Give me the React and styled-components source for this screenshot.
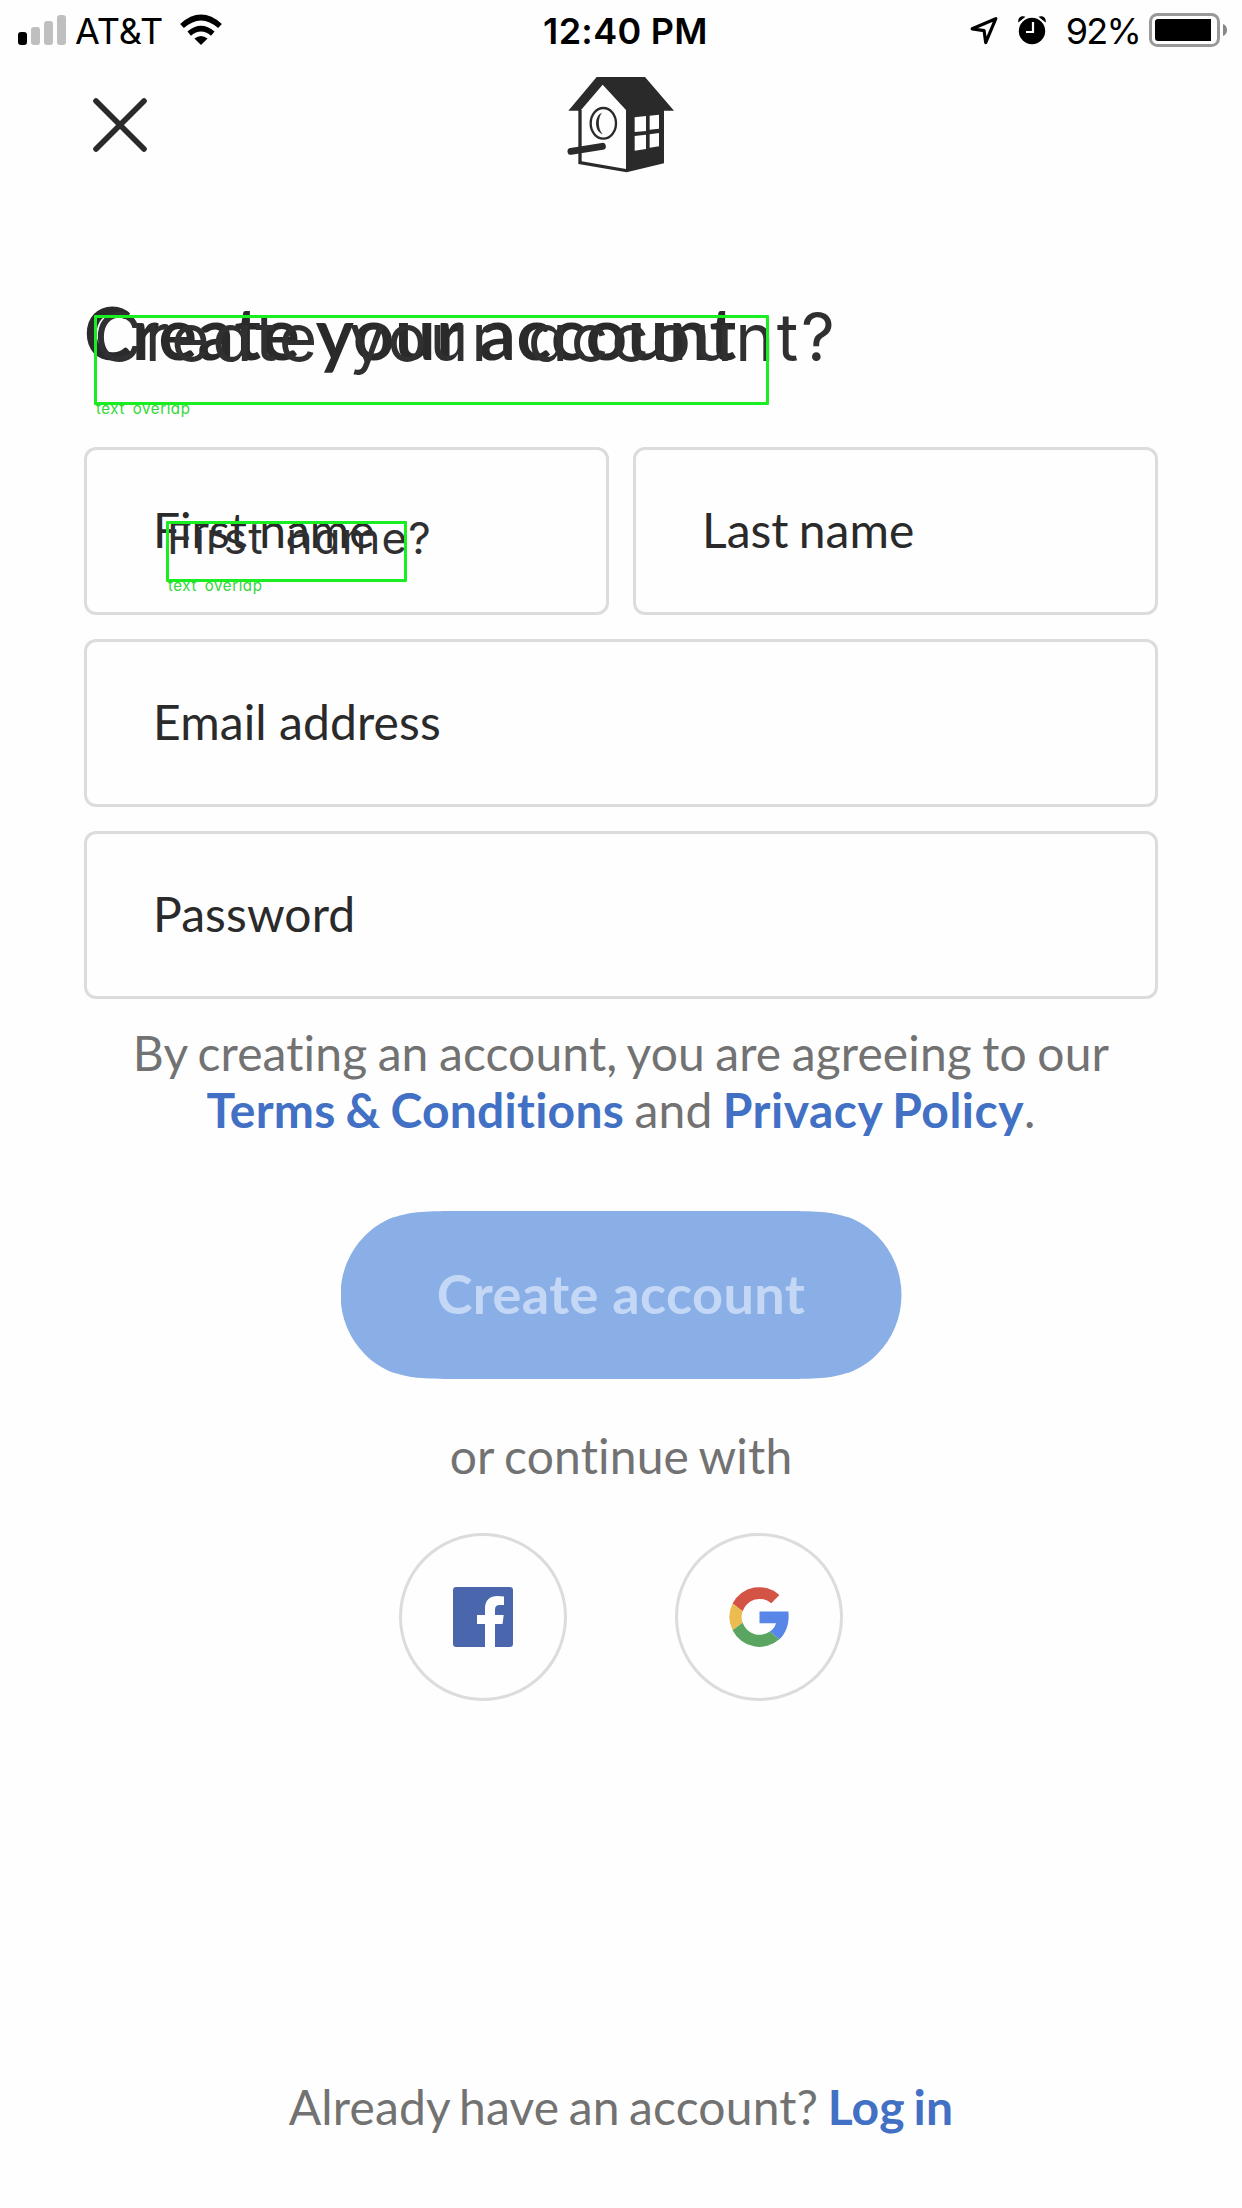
import React from "react";
import styled, { createGlobalStyle } from "styled-components";

const GlobalStyle = createGlobalStyle`
  * { box-sizing: border-box; }
  body { margin: 0; background: #fefefe; }
`;

const Screen = styled.div`
  width: 1242px;
  height: 2208px;
  display: flex;
  flex-direction: column;
  background: #fefefe;
  color: #2a2a2b;
  font-family: Lato, sans-serif;
  font-variant-ligatures: none;
  overflow: hidden;
`;

const StatusBar = styled.div`
  display: grid;
  grid-template-columns: 1fr auto 1fr;
  height: 60px;
  padding: 0 15px 0 18px;
  color: #000;
  font: 400 36px/62px Inter, sans-serif;
`;

const StatusGroup = styled.div`
  display: flex;
  justify-content: ${(p) => p.$align || "flex-start"};
  align-items: flex-start;
`;

const StatusText = styled.span`
  white-space: nowrap;
  font-weight: ${(p) => p.$weight || 400};
  letter-spacing: ${(p) => p.$spacing || "0"};
  margin: ${(p) => p.$margin || "0"};
`;

const StatusIcon = styled.svg`
  display: block;
  flex: none;
  height: 60px;
`;

const Header = styled.header`
  display: grid;
  grid-template-columns: 1fr 107px 1fr;
  align-items: center;
  padding: 16px 84px 0 93px;
  height: 113px;
`;

const IconButton = styled.button`
  display: block;
  width: 54px;
  height: 54px;
  padding: 0;
  border: 0;
  background: none;
  margin-top: 1px;
`;

const Logo = styled.svg`
  display: block;
  width: 107px;
  height: 97px;
  margin-left: -5px;
`;

const Content = styled.main`
  flex: 1;
  display: flex;
  flex-direction: column;
  padding: 113px 84px 72px;
`;

const TitleBlock = styled.div`
  position: relative;
  height: 90px;
  margin-bottom: 71px;
`;

const Title = styled.h1`
  margin: 0;
  font-size: 72px;
  font-weight: 700;
  line-height: 92px;
  letter-spacing: 0.6px;
  word-spacing: -1px;
  white-space: nowrap;
`;

const OverlayText = styled.span`
  position: absolute;
  left: ${(p) => p.$x}px;
  top: ${(p) => p.$y}px;
  font-family: Inter, sans-serif;
  font-weight: ${(p) => p.$weight || 400};
  font-size: ${(p) => p.$size}px;
  line-height: ${(p) => p.$size}px;
  letter-spacing: ${(p) => p.$spacing || 0}px;
  word-spacing: ${(p) => p.$word || 0}px;
  font-feature-settings: "cv11", "calt" 0;
  white-space: nowrap;
  color: ${(p) => p.$color || "#303032"};
`;

const OverlayFrame = styled.div`
  position: absolute;
  left: ${(p) => p.$x}px;
  top: ${(p) => p.$y}px;
  width: ${(p) => p.$w}px;
  height: ${(p) => p.$h}px;
  border: 3px solid #18ee20;
  border-radius: 1px;
`;

const Fields = styled.form`
  display: grid;
  grid-template-columns: 1fr 1fr;
  gap: 24px;
`;

const Field = styled.div`
  position: relative;
  display: flex;
  align-items: center;
  height: 168px;
  padding: 0 66px 3px;
  border: 3px solid #dcdcdc;
  border-radius: 12px;
  font-size: 48px;
  line-height: 58px;
  letter-spacing: ${(p) => p.$spacing || "0"};
  word-spacing: ${(p) => p.$word || "0"};
  grid-column: ${(p) => (p.$wide ? "1 / -1" : "auto")};
`;

const Terms = styled.p`
  margin: 25px 0 73px;
  text-align: center;
  font-size: 48px;
  line-height: 57px;
  letter-spacing: 0.12px;
  word-spacing: -2px;
  color: #727272;
`;

const Link = styled.a`
  color: #4170c4;
  font-weight: 700;
  letter-spacing: ${(p) => p.$spacing || "0.2px"};
`;

const Submit = styled.button`
  align-self: center;
  width: 561px;
  height: 168px;
  padding: 0 0 4px;
  border: 0;
  background: #8aafe7;
  color: #c4d8f6;
  font: 700 54px/65px Lato, sans-serif;
  letter-spacing: 0.4px;
  clip-path: path("M128 0 H433 C469.6 0 488 0 504.7 5.5 L508 6.3 C519 10.3 528.5 16.7 536.4 24.6 A84 84 0 0 1 536.4 143.4 C528.5 151.3 519 157.7 508 161.7 L504.7 162.5 C488 168 469.6 168 433 168 H128 C91.4 168 73 168 56.3 162.5 L53 161.7 C42 157.7 32.5 151.3 24.6 143.4 A84 84 0 0 1 24.6 24.6 C32.5 16.7 42 10.3 53 6.3 L56.3 5.5 C73 0 91.4 0 128 0 Z");
`;

const Divider = styled.p`
  margin: 48px 0 48px;
  text-align: center;
  font-size: 48px;
  line-height: 58px;
  letter-spacing: 0.15px;
  word-spacing: -2px;
  color: #727272;
`;

const Socials = styled.div`
  display: flex;
  justify-content: center;
  gap: 108px;
`;

const SocialButton = styled.button`
  display: flex;
  align-items: center;
  justify-content: center;
  width: 168px;
  height: 168px;
  padding: 0;
  border: 3px solid #dcdcdc;
  border-radius: 50%;
  background: transparent;
`;

const Footer = styled.p`
  margin: auto 0 0;
  text-align: center;
  font-size: 48px;
  line-height: 58px;
  letter-spacing: 0.15px;
  word-spacing: -3px;
  color: #727272;
`;

const Signal = () => (
  <StatusIcon width="48" viewBox="18 0 48 60">
    <rect x="18" y="32" width="9" height="13" rx="3" />
    <g fill="#bfbfbf">
      <rect x="31" y="27" width="9" height="18" rx="3" />
      <rect x="44" y="21" width="9" height="24" rx="3" />
      <rect x="57" y="15" width="9" height="30" rx="3" />
    </g>
  </StatusIcon>
);

const Wifi = () => (
  <StatusIcon width="42" viewBox="180 0 42 60">
    <path d="M201 45 L194.4 38.6 Q201 33.2 207.6 38.6 Z" />
    <path d="M189.2 33.6 Q201 23.8 212.8 33.6" fill="none" stroke="#000" strokeWidth="5.6" />
    <path d="M182 26 Q201 9 220 26" fill="none" stroke="#000" strokeWidth="5.6" />
  </StatusIcon>
);

const Arrow = () => (
  <StatusIcon width="28" viewBox="970.5 0 28 60">
    <path
      d="M972.7 28.8 L996.3 18.7 L986.2 42.6 L984.6 30.6 Z"
      fill="none"
      stroke="#000"
      strokeWidth="3.2"
      strokeLinejoin="round"
    />
  </StatusIcon>
);

const Alarm = () => (
  <StatusIcon width="28" viewBox="1019 0 28 60">
    <circle cx="1033" cy="31" r="13.2" />
    <path d="M1019.3 22.5 C1018.5 17.5 1022.5 15 1026.5 16.7 Z M1046.7 22.5 C1047.5 17.5 1043.5 15 1039.5 16.7 Z" />
    <path d="M1034 22 V32 H1027" fill="none" stroke="#fff" strokeWidth="2.2" />
  </StatusIcon>
);

const Battery = () => (
  <StatusIcon width="78" viewBox="1149 0 78 60">
    <rect x="1150.5" y="14.5" width="68" height="31" rx="7" fill="none" stroke="#999" strokeWidth="3" />
    <path d="M1158 19 H1211 V41 H1158 Q1155 41 1155 38 V22 Q1155 19 1158 19 Z" />
    <path d="M1223 24 Q1227 25.5 1227 30 Q1227 34.5 1223 36 Z" fill="#888" />
  </StatusIcon>
);

const Close = () => (
  <svg width="54" height="54" viewBox="0 0 54 54" display="block">
    <path d="M3 3 L51 51 M51 3 L3 51" stroke="#2a2a2b" strokeWidth="5.6" strokeLinecap="round" />
  </svg>
);

const Birdhouse = () => (
  <Logo viewBox="201 228 321 291">
    <path fill="#2a2a2b" d="M290 231 H435 L522 332 H492 V490 L380 517 L235 492 V332 H205 Z" />
    <path fill="#fefefe" d="M308 254 L378 330 V507 L245 484 V328 Z" />
    <ellipse cx="310" cy="370" rx="38" ry="46" fill="none" stroke="#2a2a2b" strokeWidth="7" />
    <path fill="#2a2a2b" d="M306 338 C282 346 282 395 308 402 C293 388 293 352 306 338 Z" />
    <path d="M213 454 L307 439" stroke="#2a2a2b" strokeWidth="21" strokeLinecap="round" />
    <path
      fill="#fefefe"
      d="M404 352 L438 348 V393 L404 396 Z M449 347 L477 344 V386 L449 389 Z M404 408 L438 404 V447 L404 452 Z M449 403 L477 399 V439 L449 443 Z"
    />
  </Logo>
);

const Facebook = () => (
  <svg width="60" height="60" viewBox="0 0 60 60">
    <path
      fill="#4a66ad"
      d="M3.3 0 H56.7 Q60 0 60 3.3 V56.7 Q60 60 56.7 60 H42 V37 H49.5 L50.7 28 H42 V22.5 Q42 18 46.5 18 H51 V9.4 Q48 9 45 9 Q32 9 32 21.5 V28 H24 V37 H32 V60 H3.3 Q0 60 0 56.7 V3.3 Q0 0 3.3 0 Z"
    />
  </svg>
);

const Google = () => (
  <svg width="60" height="60" viewBox="0 0 60 60">
    <path fill="#d35345" d="M3.6 16.4 A30 30 0 0 1 50.4 7.9 L42.3 16.2 A18 18 0 0 0 13.6 24.2 Z" />
    <path fill="#ecbc50" d="M3.6 16.4 A30 30 0 0 0 3.6 43.2 L13.6 35.8 A18 18 0 0 1 13.6 24.2 Z" />
    <path fill="#5aa561" d="M3.6 43.2 A30 30 0 0 0 50.4 52.3 L40.8 44.6 A18 18 0 0 1 13.6 35.8 Z" />
    <path fill="#5786e8" d="M30.5 24.5 H59.3 C60.8 35 57.5 46 50.4 52.3 L40.8 44.6 Q45.5 41.5 47 36.2 H30.5 Z" />
  </svg>
);

export default function App() {
  return (
    <Screen>
      <GlobalStyle />
      <StatusBar>
        <StatusGroup>
          <Signal />
          <StatusText $margin="0 17px 0 9px">AT&amp;T</StatusText>
          <Wifi />
        </StatusGroup>
        <StatusText $weight={600} $spacing="0.3px" $margin="0 0 0 6px">12:40 PM</StatusText>
        <StatusGroup $align="flex-end">
          <Arrow />
          <StatusText $margin="0 0 0 20px"><Alarm /></StatusText>
          <StatusText $spacing="-1.8px" $margin="0 9px 0 20px">92%</StatusText>
          <Battery />
        </StatusGroup>
      </StatusBar>
      <Header>
        <IconButton aria-label="Close"><Close /></IconButton>
        <Birdhouse />
      </Header>
      <Content>
        <TitleBlock>
          <Title>Create your account</Title>
          <OverlayText $x={10} $y={18} $size={66} $spacing={2.6} $word={8}>Create your account?</OverlayText>
          <OverlayFrame $x={10} $y={29} $w={675} $h={90} />
          <OverlayText $x={12} $y={115} $size={15} $spacing={0.6} $word={3} $color="#30d636">text overlap</OverlayText>
        </TitleBlock>
        <Fields>
          <Field>
            First name
            <OverlayText $x={80} $y={66} $size={44} $spacing={1.2} $word={9}>First name?</OverlayText>
            <OverlayFrame $x={79} $y={71} $w={241} $h={61} />
            <OverlayText $x={81} $y={128} $size={15} $spacing={0.6} $word={3} $color="#30d636">text overlap</OverlayText>
          </Field>
          <Field $word="-2px">Last name</Field>
          <Field $wide $spacing="0.1px">Email address</Field>
          <Field $wide $spacing="0.1px">Password</Field>
        </Fields>
        <Terms>
          By creating an account, you are agreeing to our
          <br />
          <Link $spacing="0.25px">Terms &amp; Conditions</Link> and <Link $spacing="0.5px">Privacy Policy</Link>.
        </Terms>
        <Submit>Create account</Submit>
        <Divider>or continue with</Divider>
        <Socials>
          <SocialButton aria-label="Facebook"><Facebook /></SocialButton>
          <SocialButton aria-label="Google"><Google /></SocialButton>
        </Socials>
        <Footer>
          Already have an account? <Link>Log in</Link>
        </Footer>
      </Content>
    </Screen>
  );
}
